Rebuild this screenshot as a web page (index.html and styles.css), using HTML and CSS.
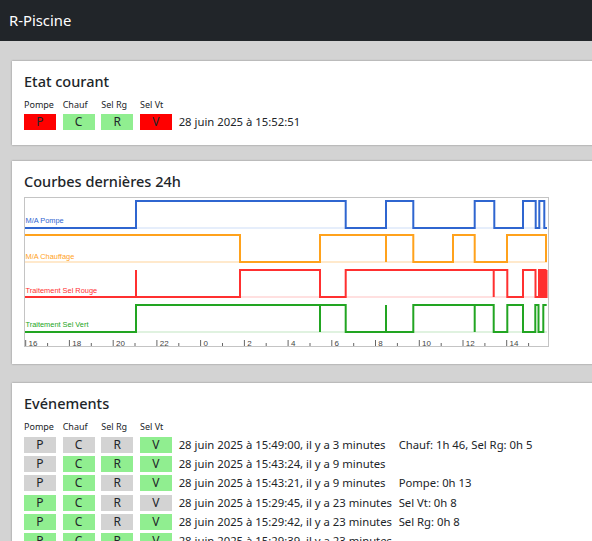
FILE: index.html
```html
<!DOCTYPE html>
<html lang="fr">
<head>
<meta charset="utf-8">
<title>R-Piscine</title>
<link rel="stylesheet" href="styles.css">
</head>
<body>
<nav class="navbar"><span class="brand">R-Piscine</span></nav>
<main class="content">
  <section class="card">
    <h5 class="card-title">Etat courant</h5>
    <div class="grid">
      <span class="lbl">Pompe</span><span class="lbl">Chauf</span><span class="lbl">Sel Rg</span><span class="lbl">Sel Vt</span><span></span><span></span>
      <span class="box on-red">P</span><span class="box on">C</span><span class="box on">R</span><span class="box on-red">V</span><span class="txt">28 juin 2025 à 15:52:51</span><span></span>
    </div>
  </section>

  <section class="card card-chart">
    <h5 class="card-title">Courbes dernières 24h</h5>
    <svg class="chart" width="525" height="150" viewBox="0 0 525 150">
      <rect x="0.5" y="0.5" width="524" height="149" fill="#fff" stroke="#c4c4c4"/>
      <g stroke-width="2" fill="none">
        <path d="M1,31H523" stroke="#e6eefb"/>
        <path d="M1,65H523" stroke="#ffe9cc"/>
        <path d="M1,100H523" stroke="#ffe0e0"/>
        <path d="M1,135H523" stroke="#e0f2e0"/>
      </g>
      <g class="lines" stroke-width="2" fill="none">
        <path stroke="#2f66d0" d="M1,31H112V4H321.7V31H362V4H389.3V31H450.7V4H470.3V31H499V4H511.7V31H515.3V4H520.3V31H523"/>
        <path stroke="#ffa21c" d="M1,38H216V65H296V38H362V65V38H389.3V65H429V38H450.7V65H483V38H522V65"/>
        <path stroke="#ff3030" d="M1,100H112V73V100H216V73H296V100H321.7V73H469.7V100V73H483.3V100H499V73H511.5V100H515V73H517V100H518V73H519.5V100H520.5V73H521.5V100H522.5V73"/>
        <path stroke="#22a522" d="M1,135H112V108H296V135V108H321.7V135H362V108V135H389.3V108H450.7V135V108H469.7V135H483.3V108H499V135H511.3V108H514.5V135H519.3V108H522.7"/>
      </g>
      <g class="series-labels">
        <text x="1.5" y="26.3" fill="#2f66d0">M/A Pompe</text>
        <text x="1.5" y="61.7" fill="#ffa21c">M/A Chauffage</text>
        <text x="1.5" y="95.7" fill="#ff3030">Traitement Sel Rouge</text>
        <text x="1.5" y="130" fill="#22a522">Traitement Sel Vert</text>
      </g>
      <g stroke="#666" stroke-width="1">
        <path d="M1.7,143V149M45.4,143V149M89.2,143V149M132.9,143V149M176.6,143V149M220.4,143V149M264.1,143V149M307.8,143V149M351.5,143V149M395.3,143V149M439,143V149M482.7,143V149"/>
        <path d="M23.6,146V149M67.3,146V149M111,146V149M154.8,146V149M198.5,146V149M242.2,146V149M286,146V149M329.7,146V149M373.4,146V149M417.2,146V149M460.9,146V149M504.6,146V149"/>
      </g>
      <g class="axis-labels">
        <text x="4.5" y="149">16</text>
        <text x="48.2" y="149">18</text>
        <text x="92" y="149">20</text>
        <text x="135.7" y="149">22</text>
        <text x="179.4" y="149">0</text>
        <text x="223.2" y="149">2</text>
        <text x="266.9" y="149">4</text>
        <text x="310.6" y="149">6</text>
        <text x="354.3" y="149">8</text>
        <text x="398.1" y="149">10</text>
        <text x="441.8" y="149">12</text>
        <text x="485.5" y="149">14</text>
      </g>
    </svg>
  </section>

  <section class="card card-events">
    <h5 class="card-title">Evénements</h5>
    <div class="grid">
      <span class="lbl">Pompe</span><span class="lbl">Chauf</span><span class="lbl">Sel Rg</span><span class="lbl">Sel Vt</span><span></span><span></span>

      <span class="box">P</span><span class="box">C</span><span class="box">R</span><span class="box on">V</span>
      <span class="txt">28 juin 2025 à 15:49:00, il y a 3 minutes</span><span class="txt">Chauf: 1h 46, Sel Rg: 0h 5</span>

      <span class="box">P</span><span class="box on">C</span><span class="box on">R</span><span class="box on">V</span>
      <span class="txt">28 juin 2025 à 15:43:24, il y a 9 minutes</span><span class="txt"></span>

      <span class="box">P</span><span class="box on">C</span><span class="box">R</span><span class="box on">V</span>
      <span class="txt">28 juin 2025 à 15:43:21, il y a 9 minutes</span><span class="txt">Pompe: 0h 13</span>

      <span class="box on">P</span><span class="box on">C</span><span class="box">R</span><span class="box">V</span>
      <span class="txt">28 juin 2025 à 15:29:45, il y a 23 minutes</span><span class="txt">Sel Vt: 0h 8</span>

      <span class="box on">P</span><span class="box on">C</span><span class="box">R</span><span class="box on">V</span>
      <span class="txt">28 juin 2025 à 15:29:42, il y a 23 minutes</span><span class="txt">Sel Rg: 0h 8</span>

      <span class="box on">P</span><span class="box on">C</span><span class="box on">R</span><span class="box on">V</span>
      <span class="txt">28 juin 2025 à 15:29:39, il y a 23 minutes</span><span class="txt"></span>
    </div>
  </section>
</main>
</body>
</html>
```

FILE: styles.css
```css
html, body {
  overflow: hidden;
}
body {
  margin: 0;
  background: #d3d3d3;
  font-family: "Noto Sans", "Open Sans", sans-serif;
  color: #212529;
}
.navbar {
  height: 41px;
  background: #212529;
  display: flex;
  align-items: center;
  padding: 0 9px;
}
.brand {
  color: #fff;
  font-size: 14.8px;
  line-height: 1;
  margin-top: -1px;
}
.content {
  width: 640px;
  padding: 20px 0 0 12px;
  display: flex;
  flex-direction: column;
  gap: 16px;
}
.card {
  background: #fff;
  box-shadow: 0 0 2px #888;
  padding: 12px 12px 15px;
}
.card-chart {
  padding-bottom: 17px;
}
.card-events {
  margin-top: 3px;
}
.card-title {
  margin: 0 0 7px;
  font-size: 14.5px;
  font-weight: 500;
  line-height: 17px;
}
.grid {
  display: grid;
  grid-template-columns: 32px 32px 32px 32px auto 1fr;
  column-gap: 6.67px;
  row-gap: 3.33px;
  align-items: center;
}
.lbl {
  font-size: 9px;
  line-height: 15px;
  margin-bottom: -1px;
  white-space: nowrap;
}
.box {
  height: 16px;
  line-height: 16px;
  text-align: center;
  font-size: 12px;
  background: #d3d3d3;
}
.box.on { background: #90ee90; }
.box.on-red { background: #ff0000; }
.txt {
  font-size: 11.3px;
  line-height: 16px;
  white-space: nowrap;
}
.chart {
  display: block;
}
.series-labels text {
  font-family: "Liberation Sans", Arial, sans-serif;
  font-size: 7.4px;
}
.axis-labels text {
  font-family: "Liberation Sans", Arial, sans-serif;
  font-size: 8px;
  fill: #444;
}
```
